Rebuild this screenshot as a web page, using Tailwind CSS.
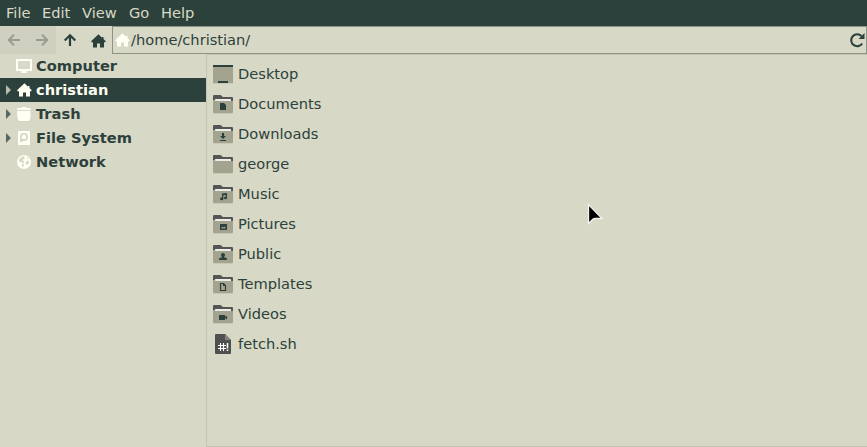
<!DOCTYPE html>
<html lang="en">
<head>
<meta charset="utf-8">
<title>File manager</title>
<script src="https://cdn.jsdelivr.net/npm/@tailwindcss/browser@4"></script>
</head>
<body class="w-[867px] h-[447px] overflow-hidden bg-[#d7d8c5] text-[#2d413c] font-['DejaVu_Sans',sans-serif] text-[14.64px] leading-[24px] cursor-default">
<svg class="hidden">
  <defs>
    <symbol id="house" viewBox="0 0 16 16"><path d="M8.500 1.300 1.300 8v1.300H3V14.500h4V10.500h3v4h4V9.300h1.500V8L13.500 6V4h-1.500v.7z"/></symbol>
    <symbol id="folder" viewBox="0 0 20 20"><path fill="#555653" d="M0 2q0-1 1-1h6.500L10 3h9q1 0 1 1v4H0z"/><path fill="#ededea" d="M2 8V5.500Q2 5 2.500 5h15q.5 0 .5.500V8z"/><path fill="#a3a390" d="M0 6h1.500q.5 0 1 1H20v11.300q0 .7-.7.700H.7Q0 19 0 18.300z"/><path fill="#c0c0ad" d="M.5 19h19v.6H.5z"/></symbol>
    <symbol id="expander" viewBox="0 0 5 10"><path d="M0 0v10l5-5z"/></symbol>
  </defs>
</svg>
<div class="flex flex-col h-full whitespace-nowrap">
  <nav class="flex h-[26px] shrink-0 bg-[#2d413c] text-[#d8d9c6] leading-[26px] pl-[6px]">
    <span class="w-[36px]">File</span><span class="w-[40px]">Edit</span><span class="w-[47px]">View</span><span class="w-[32px]">Go</span><span>Help</span>
  </nav>
  <div class="flex h-[28px] shrink-0">
    <div class="flex w-[56px] items-center bg-[#cfd0bf] text-[#989d8e]">
      <svg class="w-[28px] h-[28px]" fill="none" stroke="currentColor" stroke-width="2"><path d="M20 14H9.500M14 8.700 8.700 14l5.300 5.300"/></svg>
      <svg class="w-[28px] h-[28px]" fill="none" stroke="currentColor" stroke-width="2"><path d="M8 14h10.500M14 8.700l5.300 5.300-5.300 5.300"/></svg>
    </div>
    <div class="flex w-[56px] items-center">
      <svg class="w-[28px] h-[28px]" fill="none" stroke="currentColor" stroke-width="2.200"><path d="M14 20V9.500M8.700 14.500 14 9.200l5.300 5.300"/></svg>
      <svg class="w-[16px] h-[16px] ml-[6px] mt-px" fill="currentColor"><use href="#house"/></svg>
    </div>
    <div class="flex flex-1 items-center border border-[#8d9385] pl-[1px]">
      <svg class="w-[16px] h-[16px]" fill="#fffff3"><use href="#house"/></svg>
      <span class="ml-[1px] flex-1">/home/christian/</span>
      <svg class="w-[16px] h-[16px] mr-[1px]" viewBox="0 0 16 16"><path d="M13.200 11.500A6 6 0 1 1 12.500 4" fill="none" stroke="currentColor" stroke-width="2.100"/><path d="M15.500 1v6h-6z" fill="currentColor"/></svg>
    </div>
  </div>
  <div class="flex flex-1 min-h-0">
    <aside class="w-[206px] font-bold">
      <div class="flex items-center h-[24px] pl-[16px]">
        <svg class="w-4 h-4 mr-1" fill="#fffff3"><path fill-rule="evenodd" d="M0 1h16v12h-5v2H5v-2H0zM2 3v8h12V3z"/></svg><span>Computer</span>
      </div>
      <div class="flex items-center h-[24px] pl-[6px] bg-[#2d413c] text-[#fffff3]">
        <svg class="w-[5px] h-[10px] mr-[5px]" fill="#b9bcae"><use href="#expander"/></svg>
        <svg class="w-4 h-4 mr-1" fill="#fffff3"><use href="#house"/></svg><span>christian</span>
      </div>
      <div class="flex items-center h-[24px] pl-[6px]">
        <svg class="w-[5px] h-[10px] mr-[5px]" fill="#586961"><use href="#expander"/></svg>
        <svg class="w-4 h-4 mr-1" fill="#fffff3"><path d="M1.500 2h4l.5-1h4l.5 1h4v2h-13zM1 5h13.500v7L13.500 14.500q-.5.500-1.500.500H4q-1 0-1.500-.5L1.500 12z"/></svg><span>Trash</span>
      </div>
      <div class="flex items-center h-[24px] pl-[6px]">
        <svg class="w-[5px] h-[10px] mr-[5px]" fill="#586961"><use href="#expander"/></svg>
        <svg class="w-4 h-4 mr-1"><path fill="#fffff3" d="M2 1h12v14H2z"/><circle cx="8" cy="7" r="3.100" fill="none" stroke="#d7d8c5" stroke-width="1.800"/><path fill="#d7d8c5" d="M4 8v4h1.500L8 10.800z"/></svg><span>File System</span>
      </div>
      <div class="flex items-center h-[24px] pl-[16px]">
        <svg class="w-4 h-4 mr-1"><circle cx="8" cy="8" r="7" fill="#fffff3"/><path fill="#d7d8c5" d="M3.300 5 6 2.700 8.500 2 8 3.500l1 1-2 1v1l1.500 1.500-1 1L5 8 3 7.500zM10 7.500l2.500-1 .7 2-2 2.700-1.500-2zM6 9l2 1.500-.5 2-1.500.500zM11 3l1.800 1.500h-2z"/></svg><span>Network</span>
      </div>
    </aside>
    <main class="flex-1 border-l border-b border-t border-[#c5c6b1] pl-[6px] pt-[4px] leading-[30px]">
      <div class="flex items-center h-[30px]"><svg class="w-5 h-5 mr-[5px]"><path fill="#a3a390" d="M0 1h20v18H0z"/><path fill="#2d413c" d="M0 1h20v2H0zM5 17h10v2H5z"/><path fill="#c0c0ad" d="M0 19h20v.6H0z"/></svg><span>Desktop</span></div>
      <div class="flex items-center h-[30px]"><svg class="w-5 h-5 mr-[5px]"><use href="#folder"/><path fill="#2d413c" d="M7 9h4l2 2v5H7z"/></svg><span>Documents</span></div>
      <div class="flex items-center h-[30px]"><svg class="w-5 h-5 mr-[5px]"><use href="#folder"/><path fill="#2d413c" d="M9 9h2v3h2l-3 3-3-3h2zM7 16h6v1H7z"/></svg><span>Downloads</span></div>
      <div class="flex items-center h-[30px]"><svg class="w-5 h-5 mr-[5px]"><use href="#folder"/></svg><span>george</span></div>
      <div class="flex items-center h-[30px]"><svg class="w-5 h-5 mr-[5px]"><use href="#folder"/><path fill="#2d413c" d="M9 9.500 14 9v5h-1.300v-3l-2.400.3V15H9z"/><ellipse cx="8.700" cy="14.900" rx="1.700" ry="1.300" fill="#2d413c"/><ellipse cx="12.500" cy="14" rx="1.500" ry="1.200" fill="#2d413c"/></svg><span>Music</span></div>
      <div class="flex items-center h-[30px]"><svg class="w-5 h-5 mr-[5px]"><use href="#folder"/><path fill="#2d413c" fill-rule="evenodd" d="M7 10h7v6H7zM8 14.500h5L11.500 12.500l-1 1-1-1z"/></svg><span>Pictures</span></div>
      <div class="flex items-center h-[30px]"><svg class="w-5 h-5 mr-[5px]"><use href="#folder"/><circle cx="10" cy="11" r="2" fill="#2d413c"/><path fill="#2d413c" d="M6 16v-1q0-1.500 3-1.700V12h2v1.300q3 .2 3 1.700v1z"/></svg><span>Public</span></div>
      <div class="flex items-center h-[30px]"><svg class="w-5 h-5 mr-[5px]"><use href="#folder"/><path fill="none" stroke="#2d413c" stroke-width="1.200" d="M7.500 9.500h3l2 2v5h-5z"/><path fill="#2d413c" d="M10 9v3h3z"/></svg><span>Templates</span></div>
      <div class="flex items-center h-[30px]"><svg class="w-5 h-5 mr-[5px]"><use href="#folder"/><path fill="#2d413c" d="M6 11h6v5H6zM12 13l2-1.500v4L12 14z"/></svg><span>Videos</span></div>
      <div class="flex items-center h-[30px]"><svg class="w-5 h-5 mr-[5px]"><path fill="#4f4f4f" d="M2 1q0-1 1-1h9l6 6v13q0 1-1 1H3q-1 0-1-1z"/><path fill="#85857d" d="M12 0v6h6z"/><path fill="none" stroke="#fff" stroke-width="1.100" d="M7.500 9v8M10.500 9v8M5 11.500h8M5 14.500h8"/><path fill="none" stroke="#fff" stroke-width="1.500" d="M14.500 9v5.500M14.500 15.500V17"/></svg><span>fetch.sh</span></div>
    </main>
  </div>
</div>
<svg class="absolute left-[586px] top-[202px] w-[18px] h-[24px]"><path d="M2.500 2.500v19l4.500-4.500 2-.5H16z" fill="#000" stroke="#f4f4ef" stroke-width="1.300"/></svg>
</body>
</html>
